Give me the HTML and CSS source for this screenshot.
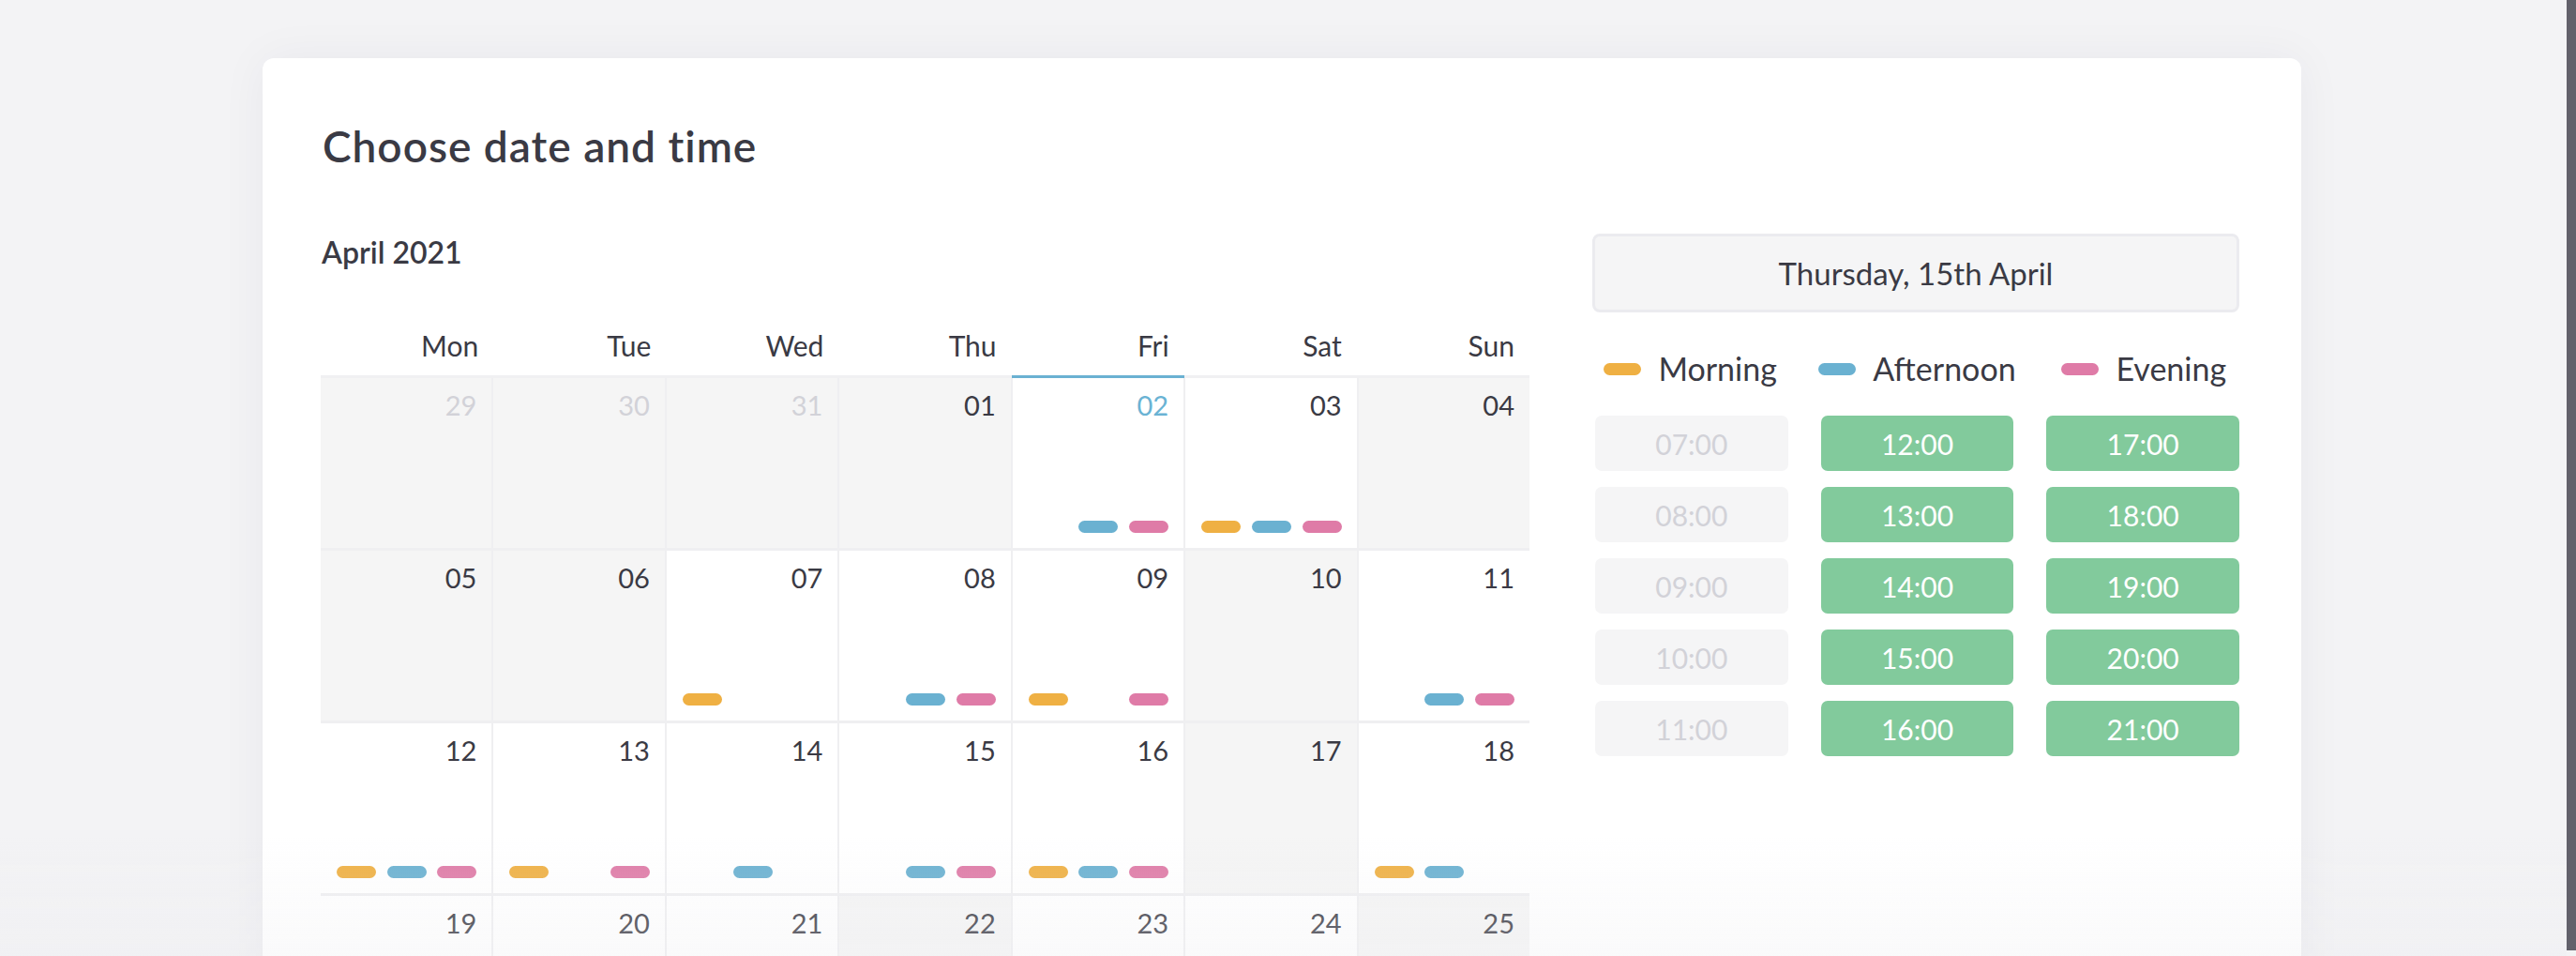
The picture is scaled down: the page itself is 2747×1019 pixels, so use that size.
FILE: index.html
```html
<!DOCTYPE html>
<html lang="en">
<head>
<meta charset="utf-8">
<title>Choose date and time</title>
<link rel="stylesheet" href="styles.css">
</head>
<body>
<div class="page">
  <div class="card">
    <h1 class="title">Choose date and time</h1>
    <div class="layout">
      <section class="calendar">
        <h2 class="month">April 2021</h2>
        <div class="cal-head">
          <div class="dow">Mon</div>
          <div class="dow">Tue</div>
          <div class="dow">Wed</div>
          <div class="dow">Thu</div>
          <div class="dow current">Fri</div>
          <div class="dow">Sat</div>
          <div class="dow">Sun</div>
        </div>
        <div class="cal-body">
          <div class="day off"><span class="num muted">29</span><div class="slots"></div></div>
          <div class="day off"><span class="num muted">30</span><div class="slots"></div></div>
          <div class="day off"><span class="num muted">31</span><div class="slots"></div></div>
          <div class="day off"><span class="num">01</span><div class="slots"></div></div>
          <div class="day"><span class="num today">02</span><div class="slots"><i class="pill none"></i><i class="pill afternoon"></i><i class="pill evening"></i></div></div>
          <div class="day"><span class="num">03</span><div class="slots"><i class="pill morning"></i><i class="pill afternoon"></i><i class="pill evening"></i></div></div>
          <div class="day off"><span class="num">04</span><div class="slots"></div></div>

          <div class="day off"><span class="num">05</span><div class="slots"></div></div>
          <div class="day off"><span class="num">06</span><div class="slots"></div></div>
          <div class="day"><span class="num">07</span><div class="slots"><i class="pill morning"></i><i class="pill none"></i><i class="pill none"></i></div></div>
          <div class="day"><span class="num">08</span><div class="slots"><i class="pill none"></i><i class="pill afternoon"></i><i class="pill evening"></i></div></div>
          <div class="day"><span class="num">09</span><div class="slots"><i class="pill morning"></i><i class="pill none"></i><i class="pill evening"></i></div></div>
          <div class="day off"><span class="num">10</span><div class="slots"></div></div>
          <div class="day"><span class="num">11</span><div class="slots"><i class="pill none"></i><i class="pill afternoon"></i><i class="pill evening"></i></div></div>

          <div class="day"><span class="num">12</span><div class="slots"><i class="pill morning"></i><i class="pill afternoon"></i><i class="pill evening"></i></div></div>
          <div class="day"><span class="num">13</span><div class="slots"><i class="pill morning"></i><i class="pill none"></i><i class="pill evening"></i></div></div>
          <div class="day"><span class="num">14</span><div class="slots"><i class="pill none"></i><i class="pill afternoon"></i><i class="pill none"></i></div></div>
          <div class="day"><span class="num">15</span><div class="slots"><i class="pill none"></i><i class="pill afternoon"></i><i class="pill evening"></i></div></div>
          <div class="day"><span class="num">16</span><div class="slots"><i class="pill morning"></i><i class="pill afternoon"></i><i class="pill evening"></i></div></div>
          <div class="day off"><span class="num">17</span><div class="slots"></div></div>
          <div class="day"><span class="num">18</span><div class="slots"><i class="pill morning"></i><i class="pill afternoon"></i><i class="pill none"></i></div></div>

          <div class="day"><span class="num">19</span><div class="slots"><i class="pill morning"></i><i class="pill afternoon"></i><i class="pill evening"></i></div></div>
          <div class="day"><span class="num">20</span><div class="slots"><i class="pill morning"></i><i class="pill none"></i><i class="pill evening"></i></div></div>
          <div class="day"><span class="num">21</span><div class="slots"><i class="pill none"></i><i class="pill afternoon"></i><i class="pill evening"></i></div></div>
          <div class="day off"><span class="num">22</span><div class="slots"></div></div>
          <div class="day"><span class="num">23</span><div class="slots"><i class="pill morning"></i><i class="pill afternoon"></i><i class="pill none"></i></div></div>
          <div class="day"><span class="num">24</span><div class="slots"><i class="pill none"></i><i class="pill afternoon"></i><i class="pill evening"></i></div></div>
          <div class="day off"><span class="num">25</span><div class="slots"></div></div>
        </div>
      </section>

      <aside class="times">
        <div class="date-box">Thursday, 15th April</div>
        <div class="legend">
          <div class="legend-item"><i class="pill morning"></i><span>Morning</span></div>
          <div class="legend-item"><i class="pill afternoon"></i><span>Afternoon</span></div>
          <div class="legend-item"><i class="pill evening"></i><span>Evening</span></div>
        </div>
        <div class="slot-grid">
          <div class="time disabled">07:00</div>
          <div class="time">12:00</div>
          <div class="time">17:00</div>
          <div class="time disabled">08:00</div>
          <div class="time">13:00</div>
          <div class="time">18:00</div>
          <div class="time disabled">09:00</div>
          <div class="time">14:00</div>
          <div class="time">19:00</div>
          <div class="time disabled">10:00</div>
          <div class="time">15:00</div>
          <div class="time">20:00</div>
          <div class="time disabled">11:00</div>
          <div class="time">16:00</div>
          <div class="time">21:00</div>
        </div>
      </aside>
    </div>
  </div>
</div>
<div class="edge"></div>
<div class="fade"></div>
</body>
</html>
```

FILE: styles.css
```css
html, body {
  margin: 0;
  padding: 0;
  height: 100%;
  overflow: hidden;
}

body {
  display: flex;
  align-items: flex-start;
  background: #f3f3f5;
  font-family: "Lato", "Liberation Sans", sans-serif;
  color: #3a3a44;
}

.page {
  flex: 1;
  padding: 62px 0 0 280px;
  min-width: 0;
}

.card {
  width: 2174px;
  box-sizing: border-box;
  background: #ffffff;
  border-radius: 12px;
  box-shadow: 0 0 50px rgba(40, 40, 70, 0.05);
  padding: 68px 66px 80px 62px;
}

.title {
  margin: 0 0 0 2px;
  font-size: 46px;
  line-height: 52px;
  font-weight: 600;
  letter-spacing: 1px;
  color: #3a3a44;
}

.layout {
  display: flex;
  gap: 67px;
  margin-top: 67px;
}

.calendar {
  width: 1289px;
  flex: none;
}

.month {
  margin: 0 0 59px 1px;
  font-size: 32px;
  line-height: 40px;
  font-weight: 600;
}

.cal-head {
  display: grid;
  grid-template-columns: repeat(7, 1fr);
}

.dow {
  font-size: 30px;
  line-height: 40px;
  text-align: right;
  padding: 0 16px 12px 0;
  border-bottom: 3px solid #f0f0f2;
}

.dow.current {
  border-bottom-color: #6ab1d2;
}

.cal-body {
  display: grid;
  grid-template-columns: repeat(7, 1fr);
  grid-auto-rows: 181px;
  gap: 3px 2px;
  background: #efeff1;
}

.day {
  display: flex;
  flex-direction: column;
  justify-content: space-between;
  background: #ffffff;
  padding: 11px 16px 16px 17px;
  box-sizing: border-box;
}

.day.off {
  background: #f5f5f5;
}

.num {
  align-self: flex-end;
  font-size: 29px;
  line-height: 36px;
  color: #3a3a44;
}

.num.muted {
  color: #d2d2d8;
}

.num.today {
  color: #6ab3d4;
}

.slots {
  display: flex;
  justify-content: space-between;
  height: 13px;
}

.pill {
  display: block;
  width: 42px;
  height: 13px;
  border-radius: 7px;
  flex: none;
}

.pill.morning { background: #efb043; }
.pill.afternoon { background: #6ab1d1; }
.pill.evening { background: #df7ba7; }
.pill.none { visibility: hidden; }

.times {
  width: 690px;
  flex: none;
}

.date-box {
  border: 3px solid #ebebef;
  border-radius: 8px;
  background: #f5f5f6;
  padding: 19px 0;
  font-size: 33px;
  line-height: 40px;
  text-align: center;
  color: #3a3a44;
}

.legend {
  display: grid;
  grid-template-columns: repeat(3, 1fr);
  column-gap: 35px;
  padding-left: 3px;
  margin-top: 38px;
}

.legend-item {
  display: flex;
  align-items: center;
  justify-content: center;
  gap: 18px;
  font-size: 34px;
  line-height: 44px;
}

.legend-item .pill {
  width: 40px;
}

.slot-grid {
  display: grid;
  grid-template-columns: repeat(3, 1fr);
  gap: 17px 35px;
  padding-left: 3px;
  margin-top: 28px;
}

.time {
  height: 59px;
  border-radius: 7px;
  background: #82ca9c;
  color: #ffffff;
  font-size: 30px;
  display: flex;
  align-items: center;
  justify-content: center;
}

.time.disabled {
  background: #f5f5f6;
  color: #d2d2d8;
}

.edge {
  width: 10px;
  height: 1013px;
  flex: none;
  background: #62616b;
}

.fade {
  position: fixed;
  left: 0;
  right: 10px;
  bottom: 0;
  height: 130px;
  background: linear-gradient(to bottom, rgba(240, 240, 243, 0), rgba(238, 238, 241, 0.3));
  pointer-events: none;
}
```
